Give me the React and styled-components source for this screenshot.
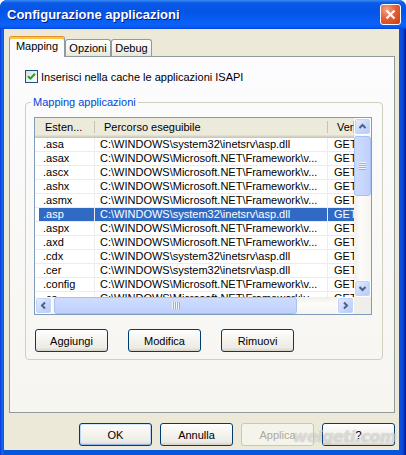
import React from "react";
import styled, { createGlobalStyle, css } from "styled-components";

const SYS = "C:\\WINDOWS\\system32\\inetsrv\\asp.dll";
const NET = "C:\\WINDOWS\\Microsoft.NET\\Framework\\v...";

const mappings = [
  { ext: ".asa", path: SYS },
  { ext: ".asax", path: NET },
  { ext: ".ascx", path: NET },
  { ext: ".ashx", path: NET },
  { ext: ".asmx", path: NET },
  { ext: ".asp", path: SYS, selected: true },
  { ext: ".aspx", path: NET },
  { ext: ".axd", path: NET },
  { ext: ".cdx", path: SYS },
  { ext: ".cer", path: SYS },
  { ext: ".config", path: NET },
  { ext: ".cs", path: NET },
];

const GlobalStyle = createGlobalStyle`
  * { box-sizing: border-box; }
  html, body { margin: 0; padding: 0; background: #fff; }
  body {
    font-family: "Liberation Sans", Arial, sans-serif;
    font-size: 11px;
    color: #000;
  }
`;

const Window = styled.div`
  position: relative;
  width: 406px;
  height: 455px;
  display: flex;
  flex-direction: column;
  background: #0842d7;
  border-radius: 7px 7px 0 0;
  overflow: hidden;
`;

const TitleBar = styled.div`
  height: 29px;
  flex: none;
  display: flex;
  align-items: center;
  justify-content: space-between;
  padding: 0 5px 0 7px;
  background: linear-gradient(180deg, #3b8cf5 0%, #0a5ae6 10%, #0454e6 40%, #0a62f8 85%, #0a5af0 93%, #0542d6 100%);
`;

const Title = styled.span`
  font: bold 13px "Liberation Sans", Arial, sans-serif;
  color: #fff;
  text-shadow: 1px 1px #0a1883;
  margin-top: -1px;
`;

const CloseButton = styled.div`
  width: 21px;
  height: 21px;
  border: 1px solid #fff;
  border-radius: 3px;
  background: radial-gradient(circle at 30% 25%, #f3a58b 0%, #e45f38 45%, #c93d12 100%);
  display: flex;
  align-items: center;
  justify-content: center;
`;

const Frame = styled.div`
  flex: 1;
  display: flex;
  padding: 0 7px 5px 4px;
  background: linear-gradient(90deg, #0831d9 0, #166aee 2px, #0855dd 4px, #0855dd calc(100% - 7px), #0847dc calc(100% - 3px), #00138c 100%);
`;

const Content = styled.div`
  flex: 1;
  display: flex;
  flex-direction: column;
  background: #ece9d8;
  padding: 7px 4px 4px 5px;
`;

const TabStrip = styled.div`
  height: 20px;
  display: flex;
  align-items: flex-end;
`;

const Tab = styled.div`
  width: ${(p) => p.$w}px;
  height: 17px;
  display: flex;
  align-items: center;
  justify-content: center;
  border: 1px solid #919b9c;
  border-bottom: none;
  border-radius: 3px 3px 0 0;
  background: linear-gradient(180deg, #ffffff 0%, #f3f3ef 60%, #e7e6dd 100%);
  ${(p) =>
    p.$active &&
    css`
      position: relative;
      z-index: 1;
      height: 21px;
      margin-bottom: -1px;
      padding-bottom: 3px;
      border-top: 1px solid #e68b2c;
      box-shadow: inset 0 2px #ffc73c;
      background: #fcfcfe;
    `}
`;

const Panel = styled.div`
  flex: 1;
  border: 1px solid #919b9c;
  background: linear-gradient(180deg, #fcfcfe 0%, #f6f5f0 100%);
  padding: 13px 11px 0 15px;
  display: flex;
  flex-direction: column;
`;

const CheckRow = styled.label`
  display: flex;
  align-items: center;
  gap: 3px;
  height: 13px;
`;

const CheckBox = styled.span`
  width: 13px;
  height: 13px;
  flex: none;
  border: 1px solid #1c5180;
  background: linear-gradient(135deg, #dcdcd7 0%, #ffffff 100%);
  display: flex;
  align-items: center;
  justify-content: center;
`;

const Group = styled.fieldset`
  margin: 13px 0 0;
  padding: 0 10px 7px 8px;
  border: 1px solid #d0d0bf;
  border-radius: 4px;
  min-width: 0;
`;

const Legend = styled.legend`
  margin-left: -3px;
  padding: 0 2px;
  line-height: 13px;
  color: #0046d5;
`;

const ListView = styled.div`
  margin-top: 8px;
  height: 198px;
  border: 1px solid #7f9db9;
  background: #fff;
  display: grid;
  grid-template-columns: minmax(0, 1fr) 17px;
  grid-template-rows: minmax(0, 1fr) 17px;
`;

const Viewport = styled.div`
  overflow: hidden;
  min-width: 0;
`;

const columns = css`
  display: grid;
  grid-template-columns: 60px 233px 26px;
`;

const HeaderRow = styled.div`
  ${columns};
  height: 20px;
  background: #ebeadb;
  box-shadow: inset 0 -1px #cbc7b8, inset 0 -2px #d6d2c2, inset 0 -3px #e2decd;
`;

const HeaderCell = styled.div`
  padding: 0 0 2px ${(p) => p.$pad}px;
  display: flex;
  align-items: center;
  white-space: nowrap;
  overflow: hidden;
  background: linear-gradient(#c7c5b2, #c7c5b2) no-repeat right 0 top 3px / 1px 12px,
    linear-gradient(#fff, #fff) no-repeat right -1px top 3px / 1px 12px;
`;

const Row = styled.div`
  ${columns};
  height: 14px;
  border-bottom: 1px solid #ececec;
`;

const Cell = styled.div`
  padding-left: ${(p) => p.$pad}px;
  margin-left: ${(p) => p.$indent || 0}px;
  line-height: 13px;
  white-space: nowrap;
  overflow: hidden;
  border-right: ${(p) => (p.$last ? "none" : "1px solid #ececec")};
  ${(p) =>
    p.$selected &&
    css`
      background: #316ac5;
      color: #fff;
    `}
`;

const VScroll = styled.div`
  display: flex;
  flex-direction: column;
  background: linear-gradient(90deg, #f0efe9 0%, #fcfcfa 40%, #f5f4ef 100%);
`;

const HScroll = styled.div`
  display: flex;
  background: linear-gradient(180deg, #f0efe9 0%, #fcfcfa 40%, #f5f4ef 100%);
`;

const Track = styled.div`
  flex: 1;
  display: flex;
  flex-direction: ${(p) => (p.$h ? "row" : "column")};
`;

const ScrollButton = styled.div`
  width: 17px;
  height: 17px;
  flex: none;
  border: 1px solid #fff;
  border-radius: 3px;
  background: linear-gradient(135deg, #e8efff 0%, #c8d8fc 55%, #b4c9f7 100%);
  box-shadow: inset 0 0 0 1px #c3d3fa;
  display: flex;
  align-items: center;
  justify-content: center;
`;

const Thumb = styled.div`
  flex: none;
  ${(p) =>
    p.$h
      ? css`
          width: ${p.$size}px;
          margin-left: 2px;
          background: linear-gradient(180deg, #cfdcfd 0%, #bed0fb 100%);
        `
      : css`
          height: ${p.$size}px;
          margin-top: 1px;
          background: linear-gradient(90deg, #cfdcfd 0%, #bed0fb 100%);
        `}
  border: 1px solid #a9bff2;
  border-radius: 3px;
  display: flex;
  align-items: center;
  justify-content: center;
`;

const Grip = styled.div`
  ${(p) =>
    p.$h
      ? css`
          width: 8px;
          height: 7px;
          background: repeating-linear-gradient(90deg, #eef4fe 0 1px, #8cb0f8 1px 2px);
        `
      : css`
          width: 7px;
          height: 8px;
          background: repeating-linear-gradient(180deg, #eef4fe 0 1px, #8cb0f8 1px 2px);
        `}
`;

const Corner = styled.div`
  background: #efeee8;
`;

const ButtonRow = styled.div`
  display: flex;
  gap: ${(p) => p.$gap}px;
  justify-content: ${(p) => (p.$end ? "flex-end" : "flex-start")};
  margin-top: ${(p) => p.$top}px;
  padding-left: ${(p) => p.$left || 0}px;
`;

const Button = styled.div`
  width: 73px;
  height: 23px;
  display: flex;
  align-items: center;
  justify-content: center;
  border: 1px solid #003c74;
  border-radius: 3px;
  background: linear-gradient(180deg, #ffffff 0%, #f4f3ee 45%, #ecebe6 85%, #d6d0c5 100%);
  ${(p) =>
    p.$default &&
    css`
      box-shadow: inset 0 1px #cee7ff, inset 0 -1px #98b8ea, inset 1px 0 #bcd4f6, inset -1px 0 #bcd4f6;
    `}
  ${(p) =>
    p.$disabled &&
    css`
      border-color: #c9c7ba;
      background: #f5f4ea;
      color: #aca899;
    `}
`;

const Watermark = styled.div`
  position: absolute;
  right: 10px;
  bottom: 9px;
  font: italic bold 16px "DejaVu Sans", sans-serif;
  letter-spacing: -0.6px;
  color: rgba(255, 255, 255, 0.55);
  text-shadow: 0 0 1px rgba(0, 0, 0, 0.3);
  pointer-events: none;
`;

const Chevron = ({ dir }) => {
  const d = {
    up: "M1.5 6 L4.5 3 L7.5 6",
    down: "M1.5 3 L4.5 6 L7.5 3",
    left: "M6 1.5 L3 4.5 L6 7.5",
    right: "M3 1.5 L6 4.5 L3 7.5",
  }[dir];
  return (
    <svg width="9" height="9" viewBox="0 0 9 9">
      <path d={d} fill="none" stroke="#4d6185" strokeWidth="2" />
    </svg>
  );
};

export default function App() {
  return (
    <>
      <GlobalStyle />
      <Window>
        <TitleBar>
          <Title>Configurazione applicazioni</Title>
          <CloseButton>
            <svg width="11" height="11" viewBox="0 0 11 11">
              <path d="M1.5 1.5 L9.5 9.5 M9.5 1.5 L1.5 9.5" stroke="#fff" strokeWidth="2.2" />
            </svg>
          </CloseButton>
        </TitleBar>
        <Frame>
          <Content>
            <TabStrip>
              <Tab $w={56} $active>Mapping</Tab>
              <Tab $w={46}>Opzioni</Tab>
              <Tab $w={41}>Debug</Tab>
            </TabStrip>
            <Panel>
              <CheckRow>
                <CheckBox>
                  <svg width="9" height="9" viewBox="0 0 9 9">
                    <path d="M1 4.2 L3.4 6.6 L8 1.8" fill="none" stroke="#21a121" strokeWidth="2" />
                  </svg>
                </CheckBox>
                Inserisci nella cache le applicazioni ISAPI
              </CheckRow>
              <Group>
                <Legend>Mapping applicazioni</Legend>
                <ListView>
                  <Viewport>
                    <HeaderRow>
                      <HeaderCell $pad={10}>Esten...</HeaderCell>
                      <HeaderCell $pad={9}>Percorso eseguibile</HeaderCell>
                      <HeaderCell $pad={9}>Ver</HeaderCell>
                    </HeaderRow>
                    {mappings.map((m) => (
                      <Row key={m.ext}>
                        <Cell $indent={4} $pad={4} $selected={m.selected}>{m.ext}</Cell>
                        <Cell $pad={5} $selected={m.selected}>{m.path}</Cell>
                        <Cell $pad={6} $last $selected={m.selected}>GET</Cell>
                      </Row>
                    ))}
                  </Viewport>
                  <VScroll>
                    <ScrollButton><Chevron dir="up" /></ScrollButton>
                    <Track>
                      <Thumb $size={60}><Grip /></Thumb>
                    </Track>
                    <ScrollButton><Chevron dir="down" /></ScrollButton>
                  </VScroll>
                  <HScroll>
                    <ScrollButton><Chevron dir="left" /></ScrollButton>
                    <Track $h>
                      <Thumb $h $size={243}><Grip $h /></Thumb>
                    </Track>
                    <ScrollButton><Chevron dir="right" /></ScrollButton>
                  </HScroll>
                  <Corner />
                </ListView>
                <ButtonRow $gap={20} $top={14} $left={1}>
                  <Button>Aggiungi</Button>
                  <Button>Modifica</Button>
                  <Button>Rimuovi</Button>
                </ButtonRow>
              </Group>
            </Panel>
            <ButtonRow $gap={8} $top={10} $end>
              <Button $default>OK</Button>
              <Button>Annulla</Button>
              <Button $disabled>Applica</Button>
              <Button>?</Button>
            </ButtonRow>
          </Content>
        </Frame>
        <Watermark>weigeti.com</Watermark>
      </Window>
    </>
  );
}
